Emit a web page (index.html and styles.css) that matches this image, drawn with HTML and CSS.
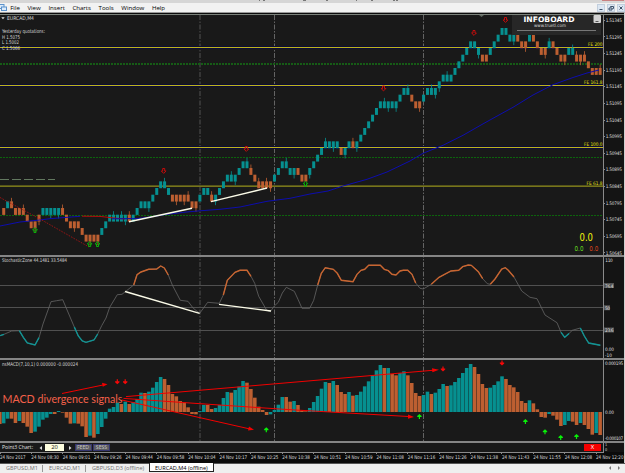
FILE: index.html
```html
<!DOCTYPE html>
<html>
<head>
<meta charset="UTF-8">
<title>EURCAD,M4 (offline)</title>
<link rel="stylesheet" href="styles.css">
</head>
<body>
<div class="terminal">
	<div class="titlebar">
		<svg width="625" height="3"><path class="frag" d="M259 0.5h1M263 0.5h2M303 0.5h3M326 0.5h2M356 0.5h1M371 0.5h2M393 0.5h2M396 0.5h2"/><rect class="close" x="602" y="0" width="22" height="1"/></svg>
	</div>
	<div class="menubar">
		<svg class="app_icon" width="8" height="9"><rect x="-1" y="1.5" width="5" height="4"/><rect x="1.5" y="4" width="5" height="3.5"/></svg>
		<span>File</span><span>View</span><span>Insert</span><span>Charts</span><span>Tools</span><span>Window</span><span>Help</span>
		<div class="win_buttons">
			<svg width="8" height="8"><path d="M2.5 5.5h3"/></svg>
			<svg width="8" height="8"><path d="M3.5 3.5v-1h3v2h-1M2 4h3v2h-3z"/></svg>
			<svg width="8" height="8"><path d="M2.5 2.5l3 3M5.5 2.5l-3 3"/></svg>
		</div>
	</div>

	<div class="charts">
		<div class="panel">
			<svg class="plot" id="price" width="603" height="240" viewBox="0 15 603 240">
				<g id="days1"></g>
				<path class="fe_shade" d="M0 47.5H603M0 85.5H603M0 147.5H603"/>
				<path class="fe" d="M0 47.5H603M0 85.5H603M0 147.5H603"/>
				<path class="fe_wide" d="M0 186H603"/>
				<path class="fe_core" d="M0 186.5H603"/>
				<path class="pivot strong" d="M0 64H603"/>
				<path class="pivot" d="M0 157.5H603M0 215.5H603"/>
				<path class="prev_close" d="M0 179.5H55"/>
				<g id="candles"></g>
				<polyline class="ma" points="0,226 10,224 20,222 37,220.3 50,218.7 80,216.3"/>
				<polyline class="ma red" points="82,216.2 100,216.4 112,217.8 125,219"/>
				<polyline class="ma" points="112,218.8 137,218.6 148,217.3 167,214.3 187,212 200,210.8 220,209.3 240,207 267,201.3 290,198.3 310,194 328,191 343,186 367,179.3 387,172 410,161 423,153.3 443,145.3 463,135.3 481,125 493,118.3 513,107.3 533,95 553,84.7 573,77.5 587,73 599,70"/>
				<path class="zigzag" d="M0 197.5L40 219L89 247"/>
				<path class="trend" d="M129 221.7L192 208.2M211 201.6L267 188"/>
				<g id="signals1"></g>
				<path class="shift_mark" d="M479 15h5l-2.5 2z"/>
				<path class="name_mark" d="M1.3 17.3h3.4l-1.7 2z"/>
				<g class="label">
					<text x="7" y="20" textLength="27">EURCAD,M4</text>
					<text x="2" y="32.7" textLength="43">Yesterday quotations:</text>
					<text x="2" y="38.6" textLength="18">H 1.5075</text>
					<text x="2" y="44.3" textLength="17">L 1.5002</text>
					<text x="2" y="50.2" textLength="18">C 1.5066</text>
				</g>
				<g class="fe_label">
					<text x="588" y="46.2" textLength="14.5">FE 200</text>
					<text x="584" y="84.4" textLength="18.5">FE 161.8</text>
					<text x="584" y="146.4" textLength="18.5">FE 100.0</text>
					<text x="586.5" y="184.8" textLength="16">FE 61.8</text>
				</g>
				<text class="spread" x="579.5" y="240.8" textLength="13.5">0.0</text>
				<text class="spread_up" x="574.5" y="250.7" textLength="9">0.0</text>
				<text class="spread_down" x="589.3" y="250.7" textLength="9">0.0</text>
				<rect class="board" x="512" y="15" width="89" height="20"/>
				<text class="board_name" x="523.5" y="22.2" textLength="51">INFOBOARD</text>
				<text class="board_url" x="534" y="27.3" textLength="32">www.truetl.com</text>
				<path class="board_line" d="M517 30.5H596"/>
				<rect class="board_btn" x="593.5" y="15" width="7.5" height="8" rx="1"/>
				<path class="board_min" d="M595.5 21.5h3"/>
			</svg>
			<svg class="axis" id="axis1" width="20" height="240" viewBox="604 15 20 240"></svg>
		</div>

		<div class="panel">
			<svg class="plot" id="stoch" width="603" height="101" viewBox="0 257 603 101">
				<g id="days2"></g>
				<path class="level" d="M0 285.5H603M0 307.5H603M0 330.5H603"/>
				<g id="stoch_lines"></g>
				<path class="trend" d="M125 291.5L199.6 313.3M219 304.4L271 311"/>
				<text class="label" x="2" y="262.4" textLength="65">StochasticZone 44.1481 33.5484</text>
			</svg>
			<svg class="axis" width="20" height="101" viewBox="604 257 20 101">
				<path class="axis_box" d="M604 285.5h10M604 307.7h6M604 330h10"/>
				<text x="605.3" y="262" textLength="7.5">110</text>
				<text x="605" y="287.5" textLength="8.5">76.4</text>
				<text x="605" y="309.7" textLength="5">50</text>
				<text x="605" y="332" textLength="8.5">23.6</text>
				<text x="605" y="351.4" textLength="9">0.00</text>
				<text x="605" y="357" textLength="7">-10</text>
			</svg>
		</div>

		<div class="panel">
			<svg class="plot" id="macd" width="603" height="81" viewBox="0 360 603 81">
				<g id="days3"></g>
				<g id="bars"></g>
				<text class="label" x="2" y="366.3" textLength="76">nsMACD(7,10,1) 0.000000 -0.000024</text>
				<g class="note_arrows">
					<path d="M62 393.5L103 385M126 396.6L434 370.2M123.5 398.4L200 403.7L290 409.7L410 416.6M122 400L250 429"/>
					<path class="head" d="M107.5 384.2l-5.5 -1.4l0.8 4zM439 369.7l-7 -1.5l0.4 4zM414 416.9l-6 -2.4v4.2zM254 429.8l-5 -3.2l-1 4z"/>
				</g>
				<text class="note" x="2.5" y="402.6" textLength="120">MACD divergence signals</text>
				<g id="signals3"></g>
			</svg>
			<svg class="axis" width="20" height="81" viewBox="604 360 20 81">
				<text x="605" y="364.8" textLength="18.3">0.000195</text>
				<text x="605" y="414.3" textLength="9">0.00</text>
				<text x="605" y="439.6" textLength="18.3">-0.000107</text>
			</svg>
		</div>

		<div class="tools">
			<div class="tools_main">
				<span class="tools_name">Point3 Chart:</span>
				<svg class="arrow_l" width="3" height="4"><path d="M3 0v4l-2.5-2z"/></svg>
				<span class="field">20</span>
				<svg class="arrow_r" width="3" height="4"><path d="M0 0v4l2.5-2z"/></svg>
				<span class="btn">FEED</span>
				<span class="btn">SESS</span>
				<span class="btn_x">X</span>
			</div>
			<svg class="axis small" width="20" height="9" viewBox="604 443 20 9">
				<text x="605" y="446.4">1</text>
				<text x="605" y="451">0</text>
			</svg>
		</div>

		<svg class="times" id="times" width="624" height="11" viewBox="0 452 624 11"></svg>
	</div>

	<div class="tabs">
		<span class="tab">GBPUSD,M1</span>
		<span class="tab">EURCAD,M1</span>
		<span class="tab wide">GBPUSD,D3 (offline)</span>
		<span class="tab active">EURCAD,M4 (offline)</span>
		<svg class="tab_scroll" width="14" height="6"><path d="M3 1v4l-2-2zM10 1v4l2-2z"/></svg>
	</div>
</div>
<script src="chart.js"></script>
</body>
</html>
```

FILE: styles.css
```css
body { margin:0; background:#f0f0f0; overflow:hidden; }
svg { display:block; }
.terminal { display:flex; flex-direction:column; width:625px; height:473px; font-family:"Open Sans","Noto Sans",sans-serif; }

.titlebar { height:3px; background:#d6d6d6; }
.titlebar .frag { stroke:#777; stroke-width:1; }
.titlebar .close { fill:#c98080; }
.menubar { display:flex; align-items:center; gap:7.6px; height:9px; background:#f2f2f2; font-size:6.1px; line-height:9px; color:#000; }
.menubar .app_icon { margin-right:-5.4px; fill:#dcebfa; stroke:#5b92cc; stroke-width:1; }
.win_buttons { display:flex; gap:2px; margin-left:auto; }
.win_buttons svg { background:#dbe6f2; fill:none; stroke:#3c5068; stroke-width:1; outline:1px solid #c2cfde; outline-offset:-1px; }

.charts { display:flex; flex-direction:column; height:449px; padding-top:1px; border-top:1px solid #9a9a9a; border-right:1px solid #d0d0d0; background:#0b0b0b; }
.panel { display:flex; border-top:2px solid #858585; background:#191919; }
.panel:first-child { border-top:1px solid #7b827b; }
.plot { border-right:1px solid #8a8a8a; }
.axis { background:#141414; overflow:hidden; }
.axis text, .times text { fill:#dcdcdc; }
.times text, .label { font-family:"DejaVu Sans Condensed","DejaVu Sans",sans-serif; font-size:5.2px; }
.axis text { font-family:"DejaVu Sans Condensed","DejaVu Sans",sans-serif; font-size:4.7px; }
.axis.small text { font-size:3.8px; }
.label, .label text { fill:#d8d8d8; }
.axis path { stroke:#8a8a8a; stroke-width:1; }
.axis .axis_box { stroke:#555; stroke-width:5; }

.day { stroke:#646464; stroke-width:1; stroke-dasharray:5 1.5 1.5 1.5; fill:none; }
.day.dim { stroke:#353535; }
.fe_shade { stroke:#0c0c38; stroke-width:3; }
.fe { stroke:#bdb41c; stroke-width:1; }
.fe_wide { stroke:#55541a; stroke-width:2; }
.fe_core { stroke:#77751a; stroke-width:1; }
.pivot { stroke:#0c640c; stroke-width:1; stroke-dasharray:2 1; }
.pivot.strong { stroke:#165c16; stroke-width:2; stroke-dasharray:2 1; }
.prev_close { stroke:#62785f; stroke-width:1; stroke-dasharray:9 3; }
.up { fill:#069090; }
.down { fill:#bd5f31; }
.ma { fill:none; stroke:#0d0dae; stroke-width:1; }
.ma.red { stroke:#b80c0c; }
.zigzag { fill:none; stroke:#a01414; stroke-width:.9; stroke-dasharray:1.6 1.2; }
.trend { fill:none; stroke:#fbfbe8; stroke-width:1.4; }
.shift_mark { fill:#626a62; }
.name_mark { fill:#ddd; }
.fe_label { font-family:"DejaVu Sans Condensed","DejaVu Sans",sans-serif; font-size:4.9px; fill:#e4e010; }
.spread { font-family:"DejaVu Sans Condensed","DejaVu Sans",sans-serif; font-size:10px; fill:#f4f410; }
.spread_up, .spread_down { font-family:"DejaVu Sans Condensed","DejaVu Sans",sans-serif; font-size:6.6px; fill:#62d820; }
.spread_down { fill:#d8431c; }
.board { fill:#272727; }
.board_name { font-family:"DejaVu Sans",sans-serif; font-size:7.4px; font-weight:bold; fill:#fff; }
.board_url { font-family:"DejaVu Sans Condensed","DejaVu Sans",sans-serif; font-size:4.6px; fill:#ddd; }
.board_line { stroke:#777; stroke-width:1; }
.board_btn { fill:#d2d2d2; }
.board_min { stroke:#555; stroke-width:1; }

.level { stroke:#505050; stroke-width:1; }
.osc { fill:none; stroke:#666; stroke-width:.8; }
.osc.hot { stroke:#c96530; stroke-width:1.4; }
.osc.cold { stroke:#109494; stroke-width:1.4; }

.note { font-family:Lato,"Open Sans",sans-serif; font-size:11.2px; fill:#f4614a; }
.note_arrows path { fill:none; stroke:#f20000; stroke-width:1; }
.note_arrows .head { fill:#f20000; stroke:none; }
.sell_box { fill:none; stroke:#c40c0c; stroke-width:1; }
.buy_box { fill:none; stroke:#08b408; stroke-width:1; }
.sell { fill:#f80808; }
.buy { fill:#08f008; }

.tools { display:flex; height:9px; border-top:2px solid #858585; background:#191919; }
.tools_main { display:flex; align-items:center; width:603px; border-right:1px solid #8a8a8a; color:#e0e0e0; font-size:5.8px; line-height:7px; }
.tools_main svg { fill:#ddd; }
.tools_name { width:37px; padding-left:2px; white-space:nowrap; font-size:5.1px; }
.field { width:19px; height:7px; margin:0 4.5px 0 3px; background:#ffffe1; color:#111; text-align:center; }
.btn { width:15px; height:5px; margin-right:1.5px; border:1px solid #34346e; background:#5c5c62; color:#c4c4c4; font-size:5.2px; line-height:5px; text-align:center; }
.arrow_r { margin-right:3px; }
.btn_x { width:17px; height:7px; margin:0 2px 0 auto; background:#f40000; color:#fff; text-align:center; }
.times .rule { stroke:#8a8a8a; stroke-width:1; fill:none; }

.tabs { display:flex; flex:1; height:9px; border-top:1px solid #555; background:#efefef; font-size:5.6px; line-height:8px; color:#707070; }
.tab { box-sizing:border-box; width:43px; padding-left:6px; border-right:1px solid #999; white-space:nowrap; height:7px; margin-top:1px; line-height:6px; }
.tab.wide { width:63px; border-right:none; }
.tab.active { width:65px; height:9px; margin-top:-1px; padding:2px 0 0 5px; border:1px solid #222; border-top:none; background:#fff; color:#000; }
.tab_scroll { margin:1px 3px 0 auto; fill:#777; }
```

FILE: chart.js
```javascript
var NS = "http://www.w3.org/2000/svg";
var X0 = 3.7, STEP = 3.924;

// t = bull, o = bear, number = brick level, ^ and _ = wicks
var bricks = "o27 t26 o26^ o27 o27 o27^ o28 o29 o29_ o28_ t27 t27 t27_ t27 t27_ o27^ o28 o29 o29_ o29 o30 o31 o31_ o31 o31_ " +
	"t30 t29 t28 t28^ t28 t28^ t28_ o28^ t28 t27 t26 t26 t26_ t25 t24 t23 t23^ t24 o25 o25_ o25 o25_ o25^ o26 o26_ " +
	"t25 t24 t24 o25^ t25_ t24 t23 t22 t22^ t22_ t21 t20 t20^ o21^ o22 o23^ o23 o23^ o23_ t22 t21 t20 t20^ t21 t21_ " +
	"o21 o22 o22 t21_ t20 t19 t18 t17^ t17 t17_ t17 o18 t18_ t17 o17^ t17_ t16 t15 t14 t13 t12 t11 t11^ t11_ t11 " +
	"t11_ t10 t9 t9^ o10 o11 o11_ t10 t9 t9^ t9_ t8_ t7 t7^ t7 t6 t5 t4 t3 t2 t2 t3_ o4 o4 t3 t2 t1 t0 t0 t1 t1_ " +
	"o1 o2 o2_ t1 o1 o2 o3 o3_ t2^ o2 o3 o4 o4_ t3 t3^ o4^ o4_ o4^ o5 o6 o6 o6^";

var macd = "t-34 t-20 o-20 o-33 t-27 o-33 o-44 o-63 t-59 t-44 t-23 t-17 t-6 o-6 t3 o-2 o-17 o-35 t-34 o-35 o-43 o-75 t-71 o-77 t-66 " +
	"t-45 t-20 t10 t15 t28 o24 t31 o24 t30 t39 t58 o57 t61 t73 t90 t105 o99 o81 o54 o47 o33 o28 o14 o-6 o-7 " +
	"t3 t21 o21 o9 t12 t21 t42 t60 o58 t66 t76 t93 o88 o69 o43 o16 o6 o-9 t-7 t6 t22 t45 o45 o31 t33 " +
	"o21 o4 o2 t12 t30 t48 t70 t90 o87 t93 o81 o60 o54 t60 o49 t51 t61 t77 t92 t110 t125 t141 o132 t132 o114 " +
	"o110 t117 t122 o110 o87 o57 o48 t51 t61 o54 t58 t69 t84 o78 t80 t90 t102 t117 t132 t144 o135 o114 o84 o72 t73 " +
	"t81 t92 t107 o99 o81 o74 o60 o33 o27 t35 o26 o8 o-15 o-17 t-6 o-11 o-23 o-42 t-39 t-27 o-29 o-39 t-33 o-39 o-51 o-68 t-63 o-69";

var osc = [[0,335.7],[4,334.3],[11.7,331],[19.3,330.7],[23.3,337.3],[27.3,343],[35,345],[39,337.7],[43,324],[51,301.7],[56.7,300.7],[62.7,299.7],
	[74.3,327],[78.3,336],[82.3,341],[86,342.3],[94,340],[97.7,334],[101.7,325.7],[106,318],[109.7,307.3],[117.3,294.7],[122,294.3],[125.3,291.7],
	[133.7,285],[137,274.7],[141,272],[148.7,269.3],[156.7,269],[160.7,266],[164.3,268],[168.3,275],[172.3,285],[180.3,300.3],[188,301.3],[193.3,308.3],
	[199.7,313.3],[207.7,302.3],[219.3,303.3],[223.3,295],[227.3,280.3],[235,272.3],[240,270.3],[247,270.3],[251,276.3],[254.7,283.3],[258.7,296.3],
	[266.7,310.3],[270.3,311.7],[274.3,306],[278.3,302.3],[282.3,293],[286.3,287.3],[294.3,291.3],[298,299.3],[302,308.3],[309.7,308.3],[313.7,300.3],
	[317.7,285],[321.3,273.3],[325.3,267.7],[333.3,269.3],[337.3,273.3],[341.3,280.3],[353,281.7],[357,274.3],[361,270.3],[364.7,269.3],[368.7,265.3],
	[380.3,265.3],[384.3,269.3],[388.3,270.7],[392,274.3],[396,275],[400,271],[403.3,270.3],[407.7,270.3],[412,274.3],[415.7,283],[420,288.3],[423.3,289],
	[431.3,284.3],[439,277.3],[451,271],[458.7,270.3],[462.7,266.7],[468.3,265],[471.3,265.3],[478.3,271.7],[482.7,278.7],[487.3,283.7],[490.3,284.3],
	[495,279],[501.7,269],[505.3,267.7],[508.3,270.3],[514,277],[521.7,291],[530,297.3],[537,298.7],[545,315],[557,322.7],[561,332.3],[564.7,337.3],
	[569,333.5],[572.3,330.3],[580.3,328],[584.3,336],[588.7,343],[600.3,345.3]];

function add(id, tag, attrs, text) {
	var el = document.createElementNS(NS, tag);
	for (var k in attrs)
		el.setAttribute(k, attrs[k]);
	if (text)
		el.textContent = text;
	document.getElementById(id).appendChild(el);
}

// candles
bricks.split(" ").forEach(function(b, i) {
	var m = b.match(/([to])(\d+)([\^_]?)/);
	var cls = m[1] == "t" ? "up" : "down";
	var x = X0 + STEP * i, y = 28 + 6.667 * m[2];
	add("candles", "rect", {"class": cls, x: x - 1.5, y: y, width: 3, height: 6.9});
	if (m[3])
		add("candles", "rect", {"class": cls, x: x - 0.4, y: m[3] == "^" ? y - 3.5 : y + 6.5, width: 0.8, height: 4});
});

// histogram
macd.split(" ").forEach(function(b, i) {
	var v = parseInt(b.substr(1)) / 3;
	add("bars", "rect", {"class": b.charAt(0) == "t" ? "up" : "down", x: X0 + STEP * i - 1.8, y: v > 0 ? 412 - v : 412, width: 3.55, height: Math.abs(v)});
});
add("bars", "rect", {"class": "down", x: 0, y: 412, width: 1.6, height: 12});

// oscillator with its hot and cold zones
function line(cls, from, to) {
	var pts = osc.filter(function(p) { return p[0] >= from && p[0] <= to; });
	add("stoch_lines", "polyline", {"class": "osc " + cls, points: pts.join(" ")});
}
line("", 0, 603);
[[133,169],[223,252],[317,416],[431,483],[490,515]].forEach(function(z) { line("hot", z[0], z[1]); });
[[0,4],[19,40],[74,98],[561,570],[580,601]].forEach(function(z) { line("cold", z[0], z[1]); });

// period separators
["days1", "days2", "days3"].forEach(function(id) {
	add(id, "path", {"class": "day dim", d: "M199.5 15V441M200.5 15V441"});
	add(id, "path", {"class": "day", d: "M274.5 15V441M423.5 15V441"});
});

// signals
function down(x, y) { return "M" + (x - 1) + " " + (y - 2.5) + "h2v2.5h1.4l-2.4 2.4l-2.4 -2.4h1.4z"; }
function up(x, y) { return "M" + (x - 1) + " " + (y + 2.5) + "h2v-2.5h1.4l-2.4 -2.4l-2.4 2.4h1.4z"; }
[[163.7,171],[246.3,149],[383.5,88.5],[474,33],[505.5,20]].forEach(function(p) { add("signals1", "path", {"class": "sell_box", d: down(p[0], p[1])}); });
[[35,230],[89.7,244],[97.5,244],[305.5,183.7]].forEach(function(p) { add("signals1", "path", {"class": "buy_box", d: up(p[0], p[1])}); });
function downFill(x, y) { return "M" + (x - 0.6) + " " + (y - 2.5) + "h1.2v2h1.6v1l-2.2 2l-2.2 -2v-1h1.6z"; }
function upFill(x, y) { return "M" + (x - 0.6) + " " + (y + 2.5) + "h1.2v-2h1.6v-1l-2.2 -2l-2.2 2v1h1.6z"; }
[[117.3,381.7],[125.2,381.7],[443,369],[502,363]].forEach(function(p) { add("signals3", "path", {"class": "sell", d: downFill(p[0], p[1])}); });
[[266.3,429.8],[419.4,416.4],[525.4,421.5],[545,431.7],[560.7,437.5],[576.5,436.5]].forEach(function(p) { add("signals3", "path", {"class": "buy", d: upFill(p[0], p[1])}); });

// price scale
for (var i = 0; i < 15; i++) {
	var y = 20.3 + 16.62 * i;
	add("axis1", "path", {d: "M604 " + (Math.floor(y) + 0.5) + "h1"});
	add("axis1", "text", {x: 605.7, y: y + 1.6, textLength: 16.3}, (1.51345 - 0.0005 * i).toFixed(5));
}

// time scale
add("times", "path", {"class": "rule", d: "M0 452.5H604"});
["2017", "08:30", "09:01", "09:26", "09:44", "09:58", "10:04", "10:17", "10:25", "10:38", "10:51", "10:59", "11:08", "11:16", "11:26", "11:38", "11:43", "11:55", "12:08", "12:20"].forEach(function(t, i) {
	var x = 31.37 * i;
	add("times", "path", {"class": "rule", d: "M" + (Math.floor(x) + 0.5) + " 452v2"});
	add("times", "text", {x: x, y: 458.6, textLength: i ? 27.5 : 25.5, lengthAdjust: "spacingAndGlyphs"}, "24 Nov " + t);
});

// squeeze the glyphs of the chart captions along with their spacing
document.querySelectorAll(".plot text[textLength]").forEach(function(t) {
	t.setAttribute("lengthAdjust", "spacingAndGlyphs");
});
```
